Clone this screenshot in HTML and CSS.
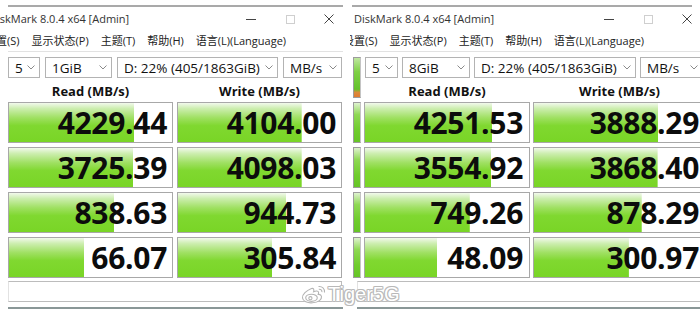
FILE: index.html
```html
<!DOCTYPE html>
<html lang="zh-CN">

<head>
    <meta charset="UTF-8">
    <meta name="viewport" content="width=device-width, initial-scale=1.0">
    <title>CrystalDiskMark 8.0.4 x64</title>
    <link rel="stylesheet" href="styles.css">
</head>

<body>
    <div class="shots">

        <!-- 1GiB run -->
        <div class="crop crop-left">
            <div class="win win-left">
                <div class="edge"></div>
                <div class="titlebar">
                    <span class="title">DiskMark 8.0.4 x64 [Admin]</span>
                    <div class="ctrls">
                        <span class="ctrl"><svg width="10" height="10"><line x1="0" y1="5.5" x2="10" y2="5.5" /></svg></span>
                        <span class="ctrl ctrl-off"><svg width="10" height="10"><rect x="1.5" y="1.5" width="8" height="8" /></svg></span>
                        <span class="ctrl"><svg width="10" height="10"><path d="M0.5 0.5 L9.5 9.5 M9.5 0.5 L0.5 9.5" /></svg></span>
                    </div>
                </div>
                <div class="menu">
                    <span>设置(S)</span>
                    <span>显示状态(P)</span>
                    <span>主题(T)</span>
                    <span>帮助(H)</span>
                    <span>语言(L)(Language)</span>
                </div>
                <div class="rule"></div>

                <div class="top">
                    <div class="side side-all"></div>
                    <div class="top-main">
                        <div class="selects">
                            <div class="select s-count">5<svg width="8" height="5"><polyline points="0.5,0.5 4,4 7.5,0.5" /></svg></div>
                            <div class="select s-size">1GiB<svg width="8" height="5"><polyline points="0.5,0.5 4,4 7.5,0.5" /></svg></div>
                            <div class="select s-drive">D: 22% (405/1863GiB)<svg width="8" height="5"><polyline points="0.5,0.5 4,4 7.5,0.5" /></svg></div>
                            <div class="select s-unit">MB/s<svg width="8" height="5"><polyline points="0.5,0.5 4,4 7.5,0.5" /></svg></div>
                        </div>
                        <div class="heads">
                            <div class="head">Read (MB/s)</div>
                            <div class="head">Write (MB/s)</div>
                        </div>
                    </div>
                </div>

                <div class="rows">
                    <div class="row"><div class="side"></div><div class="cell" style="--fill: 76.8%">4229.44</div><div class="cell" style="--fill: 75.9%">4104.00</div></div>
                    <div class="row"><div class="side"></div><div class="cell" style="--fill: 76.2%">3725.39</div><div class="cell" style="--fill: 75.9%">4098.03</div></div>
                    <div class="row"><div class="side"></div><div class="cell" style="--fill: 64.6%">838.63</div><div class="cell" style="--fill: 66.3%">944.73</div></div>
                    <div class="row"><div class="side"></div><div class="cell" style="--fill: 46.3%">66.07</div><div class="cell" style="--fill: 57.8%">305.84</div></div>
                </div>

                <div class="comment"></div>
                <div class="foot"></div>
            </div>
        </div>

        <!-- 8GiB run -->
        <div class="crop crop-right">
            <div class="win win-right">
                <div class="edge"></div>
                <div class="titlebar">
                    <span class="title">DiskMark 8.0.4 x64 [Admin]</span>
                    <div class="ctrls">
                        <span class="ctrl"><svg width="10" height="10"><line x1="0" y1="5.5" x2="10" y2="5.5" /></svg></span>
                        <span class="ctrl ctrl-off"><svg width="10" height="10"><rect x="1.5" y="1.5" width="8" height="8" /></svg></span>
                        <span class="ctrl"><svg width="10" height="10"><path d="M0.5 0.5 L9.5 9.5 M9.5 0.5 L0.5 9.5" /></svg></span>
                    </div>
                </div>
                <div class="menu">
                    <span>设置(S)</span>
                    <span>显示状态(P)</span>
                    <span>主题(T)</span>
                    <span>帮助(H)</span>
                    <span>语言(L)(Language)</span>
                </div>
                <div class="rule"></div>

                <div class="top">
                    <div class="side side-all"></div>
                    <div class="top-main">
                        <div class="selects">
                            <div class="select s-count">5<svg width="8" height="5"><polyline points="0.5,0.5 4,4 7.5,0.5" /></svg></div>
                            <div class="select s-size">8GiB<svg width="8" height="5"><polyline points="0.5,0.5 4,4 7.5,0.5" /></svg></div>
                            <div class="select s-drive">D: 22% (405/1863GiB)<svg width="8" height="5"><polyline points="0.5,0.5 4,4 7.5,0.5" /></svg></div>
                            <div class="select s-unit">MB/s<svg width="8" height="5"><polyline points="0.5,0.5 4,4 7.5,0.5" /></svg></div>
                        </div>
                        <div class="heads">
                            <div class="head">Read (MB/s)</div>
                            <div class="head">Write (MB/s)</div>
                        </div>
                    </div>
                </div>

                <div class="rows">
                    <div class="row"><div class="side"></div><div class="cell" style="--fill: 77.7%">4251.53</div><div class="cell" style="--fill: 72.8%">3888.29</div></div>
                    <div class="row"><div class="side"></div><div class="cell" style="--fill: 77.1%">3554.92</div><div class="cell" style="--fill: 72.3%">3868.40</div></div>
                    <div class="row"><div class="side"></div><div class="cell" style="--fill: 63.9%">749.26</div><div class="cell" style="--fill: 63%">878.29</div></div>
                    <div class="row"><div class="side"></div><div class="cell" style="--fill: 44%">48.09</div><div class="cell" style="--fill: 55.5%">300.97</div></div>
                </div>

                <div class="comment"></div>
                <div class="foot"></div>
            </div>
        </div>
    </div>

    <div class="watermark">
        <svg class="weibo" width="26" height="20" viewBox="0 0 26 20">
            <path d="M10.5 4.5 C5.5 6.5 1 10.5 1.5 14 C2 17.5 6.5 19.2 11.5 18.8 C17.5 18.3 21 15.5 20.5 12.5 C20.2 10.8 18.6 10.2 17.2 10.4 C18 8.6 17.6 7.2 16 7 C14.8 6.8 13.4 7.4 12.6 7.8 C13.3 5.6 12.6 3.8 10.5 4.5 Z" />
            <ellipse cx="10.5" cy="13.8" rx="5.8" ry="3.6" />
            <circle cx="9.4" cy="14.2" r="1.6" />
            <path class="arc" d="M17.5 2.5 C21 2 24 4.5 23.5 8.5" />
            <path class="arc" d="M17.8 5.2 C19.8 5 21.2 6.3 20.9 8.2" />
        </svg>
        <span class="mark">Tiger5G</span>
    </div>
</body>

</html>
```

FILE: styles.css
```css
* {
    margin: 0;
    padding: 0;
    box-sizing: border-box;
}

body {
    background: #fff;
    font-family: "Open Sans", "Noto Sans CJK SC", sans-serif;
    color: #222;
    width: 700px;
    height: 315px;
    overflow: hidden;
}

.shots {
    display: flex;
    gap: 7px;
}

.crop {
    overflow: hidden;
    height: 315px;
}

.crop-left {
    width: 343px;
}

.crop-right {
    width: 350px;
}

.win-left {
    width: 348px;
    --edge: 8px;
    --title: -11px;
    --menu: -15px;
    --rule: 8px;
    --lead: 8px;
    --gap: 4px;
    --c1: 165px;
    --c2: 165px;
}

.win-right {
    width: 358px;
    --edge: 2px;
    --title: 4px;
    --menu: -7px;
    --rule: 7px;
    --lead: 3px;
    --gap: 3px;
    --c1: 166px;
    --c2: 173px;
}

/* title bar */

.edge {
    margin: 5px 0 0 var(--edge);
    width: 340px;
    height: 2px;
    background: #a9a9a9;
}

.titlebar {
    display: flex;
    height: 24px;
    line-height: 24px;
    font-size: 11px;
    color: #333;
    white-space: nowrap;
}

.win-right .titlebar {
    width: 356px;
}

.title {
    margin-left: var(--title);
}

.ctrls {
    display: flex;
    margin-left: auto;
}

.ctrl {
    width: 39px;
    display: flex;
    align-items: center;
    justify-content: center;
}

.ctrl svg {
    fill: none;
    stroke: #444;
    stroke-width: 1;
}

.ctrl-off svg {
    stroke: #cfcfcf;
}

/* menu */

.menu {
    display: flex;
    gap: 12px;
    height: 20px;
    line-height: 20px;
    font-size: 11px;
    color: #222;
    white-space: nowrap;
    margin-left: var(--menu);
}

.rule {
    height: 1px;
    margin-left: var(--rule);
    background: #e2e2e2;
}

/* selectors + headers */

.top {
    display: flex;
    align-items: flex-start;
    gap: var(--gap);
    margin-top: 5px;
    padding-left: var(--lead);
}

.top-main {
    display: flex;
    flex-direction: column;
}

.selects {
    display: flex;
    gap: 5px;
    height: 21px;
}

.win-right .selects {
    gap: 4px;
    margin-left: 1px;
}

.select {
    display: flex;
    align-items: center;
    justify-content: space-between;
    flex: none;
    padding: 0 4px 0 6px;
    border: 1px solid #b3b3b3;
    background: #fff;
    font-size: 13.5px;
    color: #111;
    white-space: nowrap;
}

.select svg {
    fill: none;
    stroke: #8a8a8a;
    stroke-width: 1;
    flex: none;
}

.win-left .s-count { width: 32px; }
.win-left .s-size { width: 67px; }
.win-left .s-drive { width: 161px; }
.win-left .s-unit { width: 59px; }

.win-right .s-count { width: 33px; }
.win-right .s-size { width: 68px; }
.win-right .s-drive { width: 162px; }
.win-right .s-unit { width: 63px; }

.heads {
    display: flex;
    gap: var(--gap);
    margin-top: 2px;
}

.head {
    height: 22px;
    line-height: 22px;
    text-align: center;
    font-size: 13px;
    font-weight: bold;
    color: #111;
}

.head:first-child { width: var(--c1); }
.head:last-child { width: var(--c2); }

/* result rows */

.rows {
    display: flex;
    flex-direction: column;
    gap: 4px;
}

.row {
    display: flex;
    gap: var(--gap);
    padding-left: var(--lead);
    height: 41px;
}

.side {
    width: 8px;
    flex: none;
    border: 1px solid #9c9c9c;
    border-right-color: #c4c4c4;
    background: linear-gradient(#dff3cf, #8ed853 30%, #6fcc2c 70%, #66c526);
}

.side-all {
    height: 41px;
    background: linear-gradient(#bfe7a0, #7fd046 35%, #63c22a 80%, #d98a3a 88%, #e07a30);
}

.win-left .side {
    display: none;
}

.cell {
    flex: none;
    border: 1px solid #a8a8a8;
    background-color: #fff;
    background-image: linear-gradient(#f2f9ec 0%, #cdeeb0 14%, #9fe062 38%, #80d830 58%, #79d526 100%);
    background-repeat: no-repeat;
    background-size: var(--fill) 100%;
    text-align: right;
    padding-right: 5px;
    font-size: 30px;
    line-height: 39px;
    font-weight: bold;
    letter-spacing: -0.3px;
    color: #0c0c0c;
}

.row .cell:nth-child(2) { width: var(--c1); }
.row .cell:nth-child(3) { width: var(--c2); }

.win-right .cell {
    padding-right: 6px;
}

/* comment + bottom */

.comment {
    margin: 3px 0 0 var(--rule);
    height: 21px;
    border: 1px solid #bcbcbc;
    border-left-color: #e2e2e2;
}

.win-left .comment {
    width: 334px;
}

.win-right .comment {
    width: 350px;
}

.foot {
    margin: 5px 0 0 var(--rule);
    height: 2px;
    background: #8a9797;
}

/* watermark over the seam */

.watermark {
    position: absolute;
    left: 301px;
    top: 284px;
    display: flex;
    align-items: center;
    gap: 1px;
}

.weibo {
    fill: #fff;
    stroke: #b4b4b4;
    stroke-width: 1.1;
}

.weibo .arc {
    fill: none;
}

.mark {
    font-family: "Liberation Sans", Arial, sans-serif;
    font-size: 20px;
    line-height: 20px;
    color: #fff;
    text-shadow: 1px 0 0 #b8b8b8, -1px 0 0 #b8b8b8, 0 1px 0 #b8b8b8, 0 -1px 0 #b8b8b8,
        1px 1px 0 #c8c8c8, -1px -1px 0 #c8c8c8, 1px -1px 0 #c8c8c8, -1px 1px 0 #c8c8c8;
}
```
